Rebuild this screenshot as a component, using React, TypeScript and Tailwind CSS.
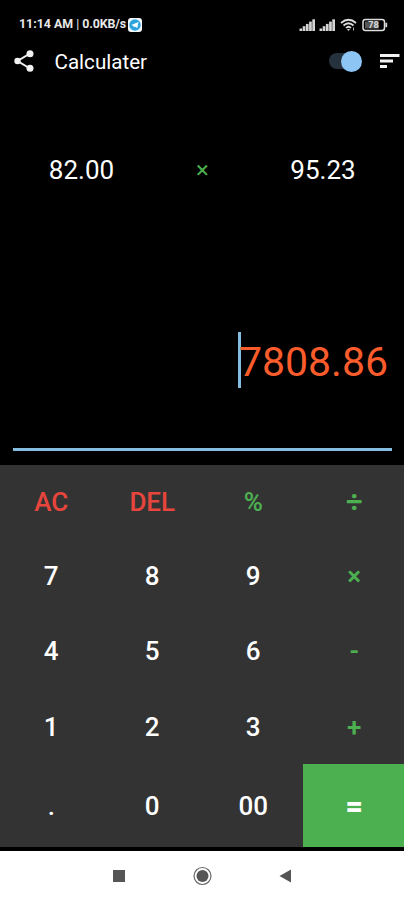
import { useState } from "react";
import type { ReactNode } from "react";

const KEYS: { label: string; kind: "num" | "clear" | "op" | "div" | "eq" }[] = [
  { label: "AC", kind: "clear" },
  { label: "DEL", kind: "clear" },
  { label: "%", kind: "op" },
  { label: "÷", kind: "div" },
  { label: "7", kind: "num" },
  { label: "8", kind: "num" },
  { label: "9", kind: "num" },
  { label: "×", kind: "op" },
  { label: "4", kind: "num" },
  { label: "5", kind: "num" },
  { label: "6", kind: "num" },
  { label: "-", kind: "op" },
  { label: "1", kind: "num" },
  { label: "2", kind: "num" },
  { label: "3", kind: "num" },
  { label: "+", kind: "op" },
  { label: ".", kind: "num" },
  { label: "0", kind: "num" },
  { label: "00", kind: "num" },
  { label: "=", kind: "eq" },
];

const KEY_STYLES = {
  num: "text-[26px] font-medium text-white",
  clear: "text-[26px] font-medium text-[#e8453c]",
  op: "text-[26px] font-semibold text-[#4caf50]",
  div: "text-[29px] font-bold text-[#4caf50]",
  eq: "bg-[#4caf50] text-[30px] font-black text-white",
};

export default function App() {
  const [scientific, setScientific] = useState(true);

  return (
    <div className="flex h-[900px] w-[404px] flex-col overflow-hidden bg-black font-['Roboto',sans-serif] text-white">
      <StatusBar />

      <header className="flex h-[38px] items-center pl-3">
        <button aria-label="Share">
          <ShareIcon />
        </button>
        <h1 className="mt-px ml-[18.5px] text-[20.6px] leading-6">Calculater</h1>
        <Toggle on={scientific} onClick={() => setScientific(!scientific)} />
        <button aria-label="Menu" className="ml-[17px]">
          <SortIcon />
        </button>
      </header>

      <div className="mt-[67px] grid h-[46px] grid-cols-[163px_79px_162px] items-center text-center text-[26px] leading-none">
        <span>82.00</span>
        <span className="text-[24px] text-[#4caf50]">×</span>
        <span>95.23</span>
      </div>

      <div className="mr-3 ml-[13px] mt-[138px] flex h-[120px] items-start justify-end border-b-[3px] border-[#85bce0] pr-1">
        <span className="-mr-[2px] mt-px h-[56px] w-[3px] bg-[#85bce0]" />
        <span className="text-[41px] leading-[62px] text-[#fb5c2c]">7808.86</span>
      </div>

      <main className="mt-auto grid h-[382px] shrink-0 grid-cols-4 grid-rows-[73px_74px_77px_75px_83px] bg-[#333333]">
        {KEYS.map(k => (
          <Key key={k.label} className={KEY_STYLES[k.kind]}>{k.label}</Key>
        ))}
      </main>

      <nav className="mt-1 flex h-[49px] shrink-0 items-center justify-center bg-white">
        <svg width="404" height="49" viewBox="0 0 404 49">
          <rect x="113" y="19" width="12" height="12" fill="#555" />
          <circle cx="202.5" cy="25" r="8.5" fill="none" stroke="#666" strokeWidth="1.2" />
          <circle cx="202.5" cy="25" r="6" fill="#555" />
          <path d="M279.5 25 291 18.500v13z" fill="#555" />
        </svg>
      </nav>
    </div>
  );
}

function Key({ children, className }: { children: ReactNode; className: string }) {
  return (
    <button className={`flex items-center justify-center pt-px pl-[1.5px] leading-none ${className}`}>
      {children}
    </button>
  );
}

function StatusBar() {
  return (
    <div className="flex h-[42px] items-center pt-[7px] pl-[19px] text-[#e8e8e8]">
      <span className="flex gap-[3px] text-[12.4px] font-bold whitespace-nowrap">
        <span>11:14 AM</span>
        <span className="font-normal">|</span>
        <span className="tracking-[-0.1px]">0.0KB/s</span>
      </span>
      <svg className="ml-[2px]" width="14" height="14" viewBox="0 0 14 14">
        <rect width="14" height="14" rx="3" fill="#f2f8fc" />
        <circle cx="7" cy="7" r="5.700" fill="#2ba3dc" />
        <path d="M3.200 6.900 10.500 4 9.300 10 6.800 8.500 5.700 9.600 5.500 7.800z" fill="#fff" />
      </svg>
      <svg className="ml-auto mr-[15px]" width="90" height="14" viewBox="0 0 90 14">
        <SignalBars x={0} />
        <SignalBars x={20} />
        <g fill="none" stroke="#ddd" strokeWidth="1.700">
          <path d="M42 5Q49.500-1.500 57 5" />
          <path d="M44.500 7.500Q49.500 3 54.500 7.500" />
          <path d="M47 10Q49.500 7.500 52 10" />
        </g>
        <path d="M48 11h3l-1.500 2z" fill="#ddd" />
        <path d="M54.500 9.500v3" stroke="#aaa" />
        <rect x="64" y="1.500" width="21.500" height="11" rx="2.500" fill="none" stroke="#ddd" strokeWidth="1.500" />
        <rect x="66" y="3.500" width="14" height="7" fill="#555" />
        <path d="M87.300 4.800v4.400" stroke="#ddd" strokeWidth="1.800" />
        <text x="74.500" y="10.400" textAnchor="middle" fontSize="9" fontWeight="700" fill="#ddd">78</text>
      </svg>
    </div>
  );
}

function SignalBars({ x }: { x: number }) {
  return (
    <g fill="#d4d4d4">
      {[0, 1, 2, 3, 4].map(i => (
        <rect key={i} x={x + 0.5 + i * 3.2} y={10.5 - i * 2.3} width="2.700" height={2.5 + i * 2.3} />
      ))}
    </g>
  );
}

function Toggle({ on, onClick }: { on: boolean; onClick: () => void }) {
  return (
    <button role="switch" aria-checked={on} aria-label="Mode" onClick={onClick} className="ml-auto">
      <span className={`-ml-[3px] mr-[2px] flex h-4 w-[32px] items-center rounded-full bg-[#26313e] ${on ? "justify-end" : "justify-start"}`}>
        <span className="-mr-px h-[21px] w-[21px] rounded-full bg-[#8dc5f5]" />
      </span>
    </button>
  );
}

function ShareIcon() {
  return (
    <svg width="24" height="24" viewBox="0 0 24 24" fill="#f2f2f2">
      <path d="M18 4.500 5.500 12 18 19.500" fill="none" stroke="#f2f2f2" strokeWidth="2" />
      <circle cx="5.500" cy="12" r="3.200" />
      <circle cx="18" cy="4.800" r="3.500" />
      <circle cx="18" cy="19.200" r="3.500" />
    </svg>
  );
}

function SortIcon() {
  return (
    <svg width="24" height="24" viewBox="0 0 24 24" fill="#f2f2f2">
      <rect x="0" y="5" width="19.500" height="3" />
      <rect x="0" y="10.500" width="13" height="3" />
      <rect x="0" y="16" width="7" height="3" />
    </svg>
  );
}
